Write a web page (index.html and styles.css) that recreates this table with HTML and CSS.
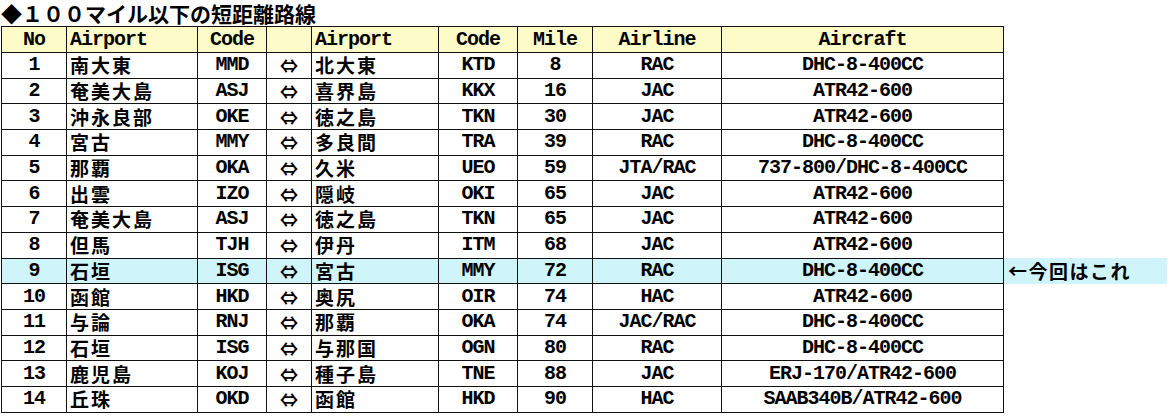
FILE: index.html
```html
<!DOCTYPE html>
<html lang="ja">
<head>
<meta charset="utf-8">
<title>100マイル以下の短距離路線</title>
<link rel="stylesheet" href="styles.css">
</head>
<body>
<div class="page">
  <h1 class="title">◆１００マイル以下の短距離路線</h1>
  <table class="routes">
    <colgroup>
      <col class="c-no"><col class="c-ap"><col class="c-code"><col class="c-arr"><col class="c-ap2"><col class="c-code2"><col class="c-mile"><col class="c-airline"><col class="c-aircraft"><col class="c-note">
    </colgroup>
    <thead>
      <tr class="head">
        <th class="ctr">No</th><th class="lft">Airport</th><th class="ctr">Code</th><th></th><th class="lft">Airport</th><th class="ctr">Code</th><th class="ctr">Mile</th><th class="ctr">Airline</th><th class="ctr">Aircraft</th><td class="note"></td>
      </tr>
    </thead>
    <tbody>
      <tr><td class="ctr">1</td><td class="jp">南大東</td><td class="ctr">MMD</td><td class="arr">⇔</td><td class="jp">北大東</td><td class="ctr">KTD</td><td class="ctr">8</td><td class="ctr">RAC</td><td class="ctr">DHC-8-400CC</td><td class="note"></td></tr>
      <tr><td class="ctr">2</td><td class="jp">奄美大島</td><td class="ctr">ASJ</td><td class="arr">⇔</td><td class="jp">喜界島</td><td class="ctr">KKX</td><td class="ctr">16</td><td class="ctr">JAC</td><td class="ctr">ATR42-600</td><td class="note"></td></tr>
      <tr><td class="ctr">3</td><td class="jp">沖永良部</td><td class="ctr">OKE</td><td class="arr">⇔</td><td class="jp">徳之島</td><td class="ctr">TKN</td><td class="ctr">30</td><td class="ctr">JAC</td><td class="ctr">ATR42-600</td><td class="note"></td></tr>
      <tr><td class="ctr">4</td><td class="jp">宮古</td><td class="ctr">MMY</td><td class="arr">⇔</td><td class="jp">多良間</td><td class="ctr">TRA</td><td class="ctr">39</td><td class="ctr">RAC</td><td class="ctr">DHC-8-400CC</td><td class="note"></td></tr>
      <tr><td class="ctr">5</td><td class="jp">那覇</td><td class="ctr">OKA</td><td class="arr">⇔</td><td class="jp">久米</td><td class="ctr">UEO</td><td class="ctr">59</td><td class="ctr">JTA/RAC</td><td class="ctr">737-800/DHC-8-400CC</td><td class="note"></td></tr>
      <tr><td class="ctr">6</td><td class="jp">出雲</td><td class="ctr">IZO</td><td class="arr">⇔</td><td class="jp">隠岐</td><td class="ctr">OKI</td><td class="ctr">65</td><td class="ctr">JAC</td><td class="ctr">ATR42-600</td><td class="note"></td></tr>
      <tr><td class="ctr">7</td><td class="jp">奄美大島</td><td class="ctr">ASJ</td><td class="arr">⇔</td><td class="jp">徳之島</td><td class="ctr">TKN</td><td class="ctr">65</td><td class="ctr">JAC</td><td class="ctr">ATR42-600</td><td class="note"></td></tr>
      <tr><td class="ctr">8</td><td class="jp">但馬</td><td class="ctr">TJH</td><td class="arr">⇔</td><td class="jp">伊丹</td><td class="ctr">ITM</td><td class="ctr">68</td><td class="ctr">JAC</td><td class="ctr">ATR42-600</td><td class="note"></td></tr>
      <tr class="hl"><td class="ctr">9</td><td class="jp">石垣</td><td class="ctr">ISG</td><td class="arr">⇔</td><td class="jp">宮古</td><td class="ctr">MMY</td><td class="ctr">72</td><td class="ctr">RAC</td><td class="ctr">DHC-8-400CC</td><td class="note">←今回はこれ</td></tr>
      <tr><td class="ctr">10</td><td class="jp">函館</td><td class="ctr">HKD</td><td class="arr">⇔</td><td class="jp">奥尻</td><td class="ctr">OIR</td><td class="ctr">74</td><td class="ctr">HAC</td><td class="ctr">ATR42-600</td><td class="note"></td></tr>
      <tr><td class="ctr">11</td><td class="jp">与論</td><td class="ctr">RNJ</td><td class="arr">⇔</td><td class="jp">那覇</td><td class="ctr">OKA</td><td class="ctr">74</td><td class="ctr">JAC/RAC</td><td class="ctr">DHC-8-400CC</td><td class="note"></td></tr>
      <tr><td class="ctr">12</td><td class="jp">石垣</td><td class="ctr">ISG</td><td class="arr">⇔</td><td class="jp">与那国</td><td class="ctr">OGN</td><td class="ctr">80</td><td class="ctr">RAC</td><td class="ctr">DHC-8-400CC</td><td class="note"></td></tr>
      <tr><td class="ctr">13</td><td class="jp">鹿児島</td><td class="ctr">KOJ</td><td class="arr">⇔</td><td class="jp">種子島</td><td class="ctr">TNE</td><td class="ctr">88</td><td class="ctr">JAC</td><td class="ctr">ERJ-170/ATR42-600</td><td class="note"></td></tr>
      <tr><td class="ctr">14</td><td class="jp">丘珠</td><td class="ctr">OKD</td><td class="arr">⇔</td><td class="jp">函館</td><td class="ctr">HKD</td><td class="ctr">90</td><td class="ctr">HAC</td><td class="ctr">SAAB340B/ATR42-600</td><td class="note"></td></tr>
    </tbody>
  </table>
</div>
</body>
</html>
```

FILE: styles.css
```css
html, body {
  margin: 0;
  padding: 0;
  background: #ffffff;
}

.page {
  padding: 0 0 0 1px;
  font-family: "Liberation Mono", "Noto Sans CJK JP", monospace;
  font-weight: bold;
  color: #000000;
}

.title {
  margin: 0;
  padding-top: 3px;
  height: 23px;
  line-height: 20px;
  font-size: 21px;
  font-weight: bold;
  font-family: "Noto Sans CJK JP", sans-serif;
  letter-spacing: 0;
  white-space: nowrap;
}

.routes {
  border-collapse: collapse;
  table-layout: fixed;
  width: 1165px;
  font-size: 20px;
  letter-spacing: -1px;
}

.c-no { width: 65px; }
.c-ap { width: 131px; }
.c-code { width: 69px; }
.c-arr { width: 45px; }
.c-ap2 { width: 127px; }
.c-code2 { width: 79px; }
.c-mile { width: 75px; }
.c-airline { width: 129px; }
.c-aircraft { width: 282px; }
.c-note { width: 163px; }

.routes th,
.routes td {
  border: 1px solid #111111;
  padding: 0 3px;
  height: 24.7px;
  line-height: 20px;
  white-space: nowrap;
  font-weight: bold;
}

.routes .head th {
  background: #fdfcc9;
  height: 25px;
}

.routes td.jp {
  text-align: left;
  font-family: "Noto Sans CJK JP", sans-serif;
  font-size: 19px;
  line-height: 20px;
  letter-spacing: 2px;
}

.routes td.arr {
  text-align: center;
  font-family: "Noto Sans CJK JP", "DejaVu Sans", sans-serif;
  font-size: 18px;
  line-height: 20px;
  letter-spacing: 0;
}

.routes td.note {
  border: none;
  text-align: left;
  padding-left: 4px;
  font-family: "Noto Sans CJK JP", sans-serif;
  font-size: 19px;
  line-height: 20px;
  letter-spacing: 1.5px;
}

.ctr { text-align: center; }
.lft { text-align: left; }

.routes tr.hl td {
  background: #cff4f9;
}
```
